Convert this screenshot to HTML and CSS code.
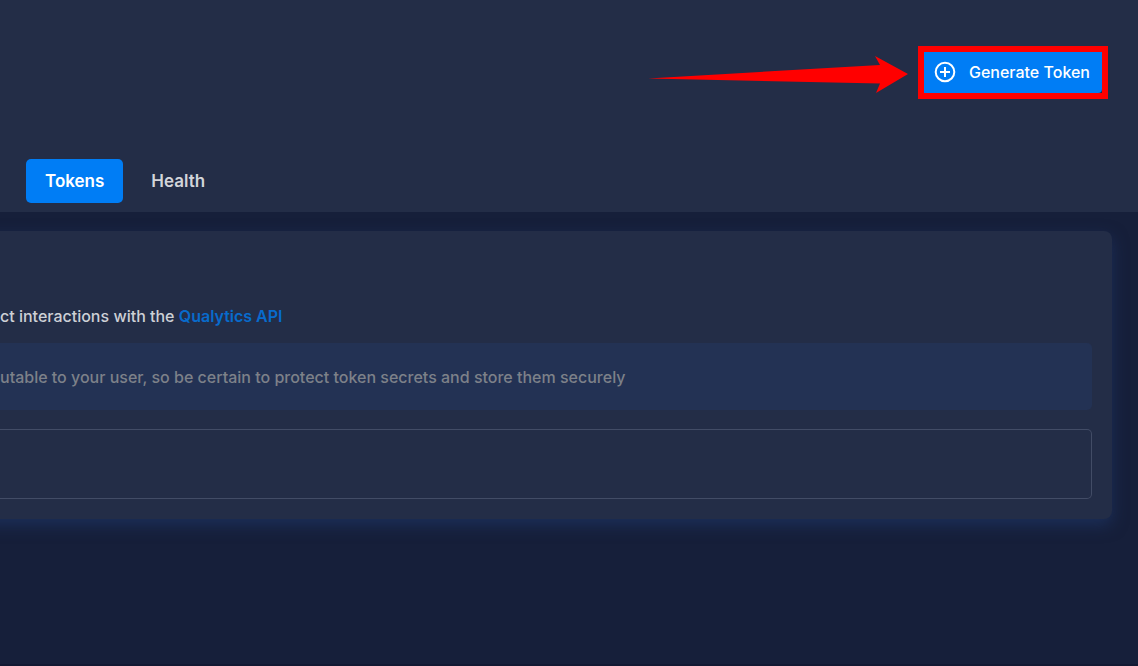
FILE: index.html
```html
<!DOCTYPE html>
<html lang="en">
<head>
<meta charset="utf-8">
<meta name="viewport" content="width=device-width, initial-scale=1">
<title>Tokens</title>
<link rel="stylesheet" href="styles.css">
</head>
<body>
<header class="header">
  <div class="toolbar">
    <svg class="arrow" viewBox="0 0 260 38" aria-hidden="true"><path d="M0 22.5 232 9 227 0 260 18 228 37 232 27.500Z" fill="#f00"/></svg>
    <div class="highlight">
      <button class="generate" type="button">
        <svg class="plus" viewBox="0 0 22 22" fill="none" stroke="currentColor" stroke-width="2" aria-hidden="true"><circle cx="11" cy="11" r="9.300"/><path d="M11 6v10M6 11h10"/></svg>
        <span>Generate Token</span>
      </button>
    </div>
  </div>
  <nav class="tabs">
    <button class="tab active" type="button">Tokens</button>
    <button class="tab" type="button">Health</button>
  </nav>
</header>
<main class="content">
  <section class="card">
    <p class="intro">ct interactions with the <a class="link" href="#">Qualytics API</a></p>
    <p class="notice">utable to your user, so be certain to protect token secrets and store them securely</p>
    <div class="token-box"></div>
  </section>
</main>
</body>
</html>
```
FILE: styles.css
```css
* { box-sizing: border-box; }
body {
  margin: 0;
  min-height: 100vh;
  background: #161f3a;
  border-bottom: 2px solid #121933;
  color: #cdd0d6;
  font: 500 16px/24px Inter, "Open Sans", sans-serif;
  overflow-x: hidden;
}
.header { background: #232d47; padding: 46px 30px 9px 26px; }
.toolbar { display: flex; justify-content: flex-end; align-items: flex-start; gap: 10px; }
.arrow { width: 260px; height: 38px; margin-top: 10px; }
.highlight { border: 6px solid #f00; background: #232d47; }
.generate {
  display: flex;
  align-items: center;
  gap: 13px;
  height: 41px;
  padding: 0 12px 2px 10px;
  border: 0;
  border-radius: 0 0 4px 0;
  background: #007df5;
  color: #fff;
  font: 500 16px/22px Inter, sans-serif;
  white-space: nowrap;
}
.plus { width: 22px; height: 22px; }
.tabs { display: flex; gap: 9px; margin-top: 60px; }
.tab {
  height: 44px;
  padding: 0 19px;
  border: 0;
  border-radius: 5px;
  background: transparent;
  color: #d3d5da;
  font: 600 17px/24px Inter, sans-serif;
}
.active { background: #007df5; color: #fff; }
.content { padding: 19px 26px 0 0; }
.card {
  margin-left: -40px;
  padding: 73px 20px 20px 40px;
  border-radius: 8px;
  background: #232d47;
  box-shadow: 0 6px 16px #1f3b7090;
}
.intro { margin: 0; white-space: nowrap; }
.link { color: #086bcc; font-weight: 600; text-decoration: none; }
.notice {
  margin: 15px 0 19px;
  padding: 22px 0 21px;
  border-radius: 0 5px 5px 0;
  background: #233254;
  color: #7d8189;
}
.token-box {
  height: 70px;
  border: 1px solid #424c66;
  border-left: 0;
  border-radius: 0 5px 5px 0;
}
```
